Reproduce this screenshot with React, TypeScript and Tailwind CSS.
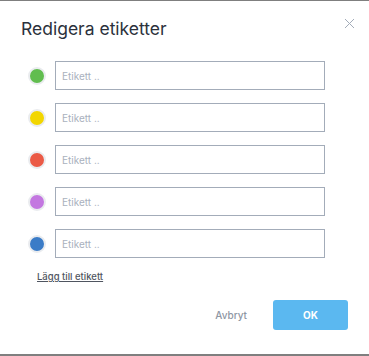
const colors = ['#61bd4f', '#f2d600', '#eb5a46', '#c377e0', '#3b7cc7'];

const LabelRow = ({ color }: { color: string }) => (
  <div className="flex items-center gap-[9px]">
    <span
      className="h-[18px] w-[18px] rounded-full border-2 border-[#eaecef]"
      style={{ backgroundColor: color }}
    />
    <input
      placeholder="Etikett .."
      className="h-[29px] w-[270px] border border-[#a3acb9] bg-white px-[6px] text-[10px] text-[#2f3542] outline-none placeholder:text-[#a9b1bd]"
    />
  </div>
);

export default function App() {
  return (
    <div className="h-[356px] w-[369px] bg-[#7f7f7f] pt-px font-['Inter',sans-serif]">
      <div className="flex h-[353px] flex-col bg-white">
        <div className="flex items-start justify-between pl-[21px] pr-[14px] pt-[16px]">
          <h2 className="text-[17.5px] leading-[24px] text-[#2b313c]">Redigera etiketter</h2>
          <button className="mt-[1px] text-[#a3acb9]" aria-label="Stäng">
            <svg width="11" height="11" viewBox="0 0 11 11" fill="none" stroke="currentColor" strokeWidth="1">
              <path d="M1 1l9 9M10 1l-9 9" />
            </svg>
          </button>
        </div>
        <div className="mt-[20px] flex flex-col gap-[13px] pl-[28px]">
          {colors.map((c) => (
            <LabelRow key={c} color={c} />
          ))}
        </div>
        <a href="#" className="ml-[37px] mt-[12px] self-start text-[9.5px] font-medium text-[#4f5560] underline">
          Lägg till etikett
        </a>
        <div className="mt-[16px] flex items-center justify-end gap-[26px] pr-[21px]">
          <button className="text-[10px] font-medium text-[#8e96a3]">Avbryt</button>
          <button className="h-[30px] w-[75px] rounded-[3px] bg-[#5bb8f0] text-[10px] font-bold text-white">OK</button>
        </div>
      </div>
    </div>
  );
}
